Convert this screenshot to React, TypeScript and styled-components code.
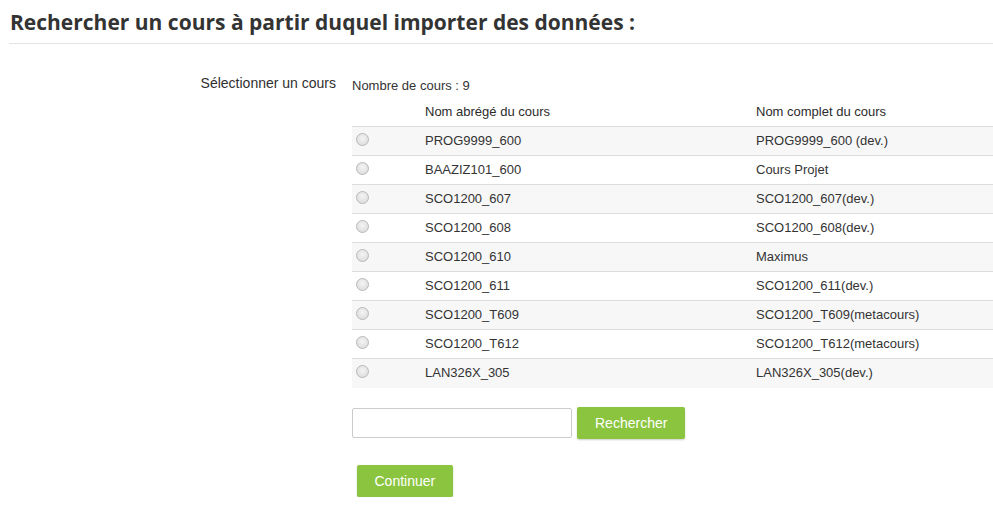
import styled, { createGlobalStyle } from "styled-components";

const GlobalStyle = createGlobalStyle`
  body {
    margin: 0;
    background: #fff;
    font-family: "Liberation Sans", Arial, sans-serif;
    color: #333;
  }
`;

const Page = styled.div`
  padding: 0 0 0 9px;
`;

const Heading = styled.h2`
  font-family: "Open Sans", sans-serif;
  font-weight: 700;
  font-size: 21px;
  line-height: 28px;
  color: #333;
  margin: 0;
  padding: 8px 0 7px 1px;
  border-bottom: 1px solid #e3e3e3;
`;

const FormRow = styled.div`
  display: grid;
  grid-template-columns: 327px 1fr;
  gap: 16px;
  margin-top: 30px;
`;

const Label = styled.div`
  text-align: right;
  font-size: 14px;
  line-height: 20px;
  margin-top: -1px;
  color: #2f2f2f;
`;

const Content = styled.div`
  display: flex;
  flex-direction: column;
`;

const Count = styled.div`
  font-size: 13px;
  line-height: 18px;
  padding-top: 3px;
`;

const Table = styled.table`
  border-collapse: collapse;
  width: 641px;
  font-size: 13px;
  margin-top: 4px;
`;

const HeadCell = styled.th`
  text-align: left;
  font-weight: 400;
  padding: 4px 8px 6px;
  height: 27px;
  box-sizing: border-box;
  line-height: 17px;
  color: #2b2b2b;
`;

const Row = styled.tr<{ $odd: boolean }>`
  background: ${(p) => (p.$odd ? "#f7f7f7" : "#fff")};
  border-top: 1px solid #dddddd;
`;

const Cell = styled.td`
  padding: 0 8px 2px;
  height: 29px;
  box-sizing: border-box;
  line-height: 17px;
`;

const RadioCell = styled(Cell)`
  padding: 0 0 0 4px;
  width: 65px;
`;

const Radio = styled.span`
  display: block;
  width: 11px;
  height: 11px;
  border-radius: 50%;
  border: 1px solid #b9b9b9;
  background: radial-gradient(circle at 50% 40%, #f4f4f4, #d7d7d7);
  margin-top: -3px;
`;

const SearchRow = styled.div`
  display: flex;
  align-items: center;
  gap: 5px;
  margin-top: 19px;
`;

const SearchInput = styled.input`
  width: 220px;
  height: 30px;
  box-sizing: border-box;
  border: 1px solid #cccccc;
  border-radius: 2px;
  font-size: 13px;
  padding: 4px 8px;
`;

const GreenButton = styled.button`
  background: #8bc53f;
  color: #fff;
  border: none;
  border-radius: 2px;
  font-family: "Liberation Sans", Arial, sans-serif;
  font-size: 14px;
  height: 32px;
  padding: 0 18px;
  box-shadow: 0 1px 2px rgba(0, 0, 0, 0.2);
  cursor: pointer;
`;

const ContinueButton = styled(GreenButton)`
  align-self: flex-start;
  margin: 26px 0 0 5px;
  padding: 0 17.5px;
`;

const courses = [
  ["PROG9999_600", "PROG9999_600 (dev.)"],
  ["BAAZIZ101_600", "Cours Projet"],
  ["SCO1200_607", "SCO1200_607(dev.)"],
  ["SCO1200_608", "SCO1200_608(dev.)"],
  ["SCO1200_610", "Maximus"],
  ["SCO1200_611", "SCO1200_611(dev.)"],
  ["SCO1200_T609", "SCO1200_T609(metacours)"],
  ["SCO1200_T612", "SCO1200_T612(metacours)"],
  ["LAN326X_305", "LAN326X_305(dev.)"],
];

export default function App() {
  return (
    <Page>
      <GlobalStyle />
      <Heading>Rechercher un cours à partir duquel importer des données :</Heading>
      <FormRow>
        <Label>Sélectionner un cours</Label>
        <Content>
          <Count>Nombre de cours : {courses.length}</Count>
          <Table>
            <thead>
              <tr>
                <HeadCell style={{ width: 65 }}></HeadCell>
                <HeadCell style={{ width: 331 }}>Nom abrégé du cours</HeadCell>
                <HeadCell>Nom complet du cours</HeadCell>
              </tr>
            </thead>
            <tbody>
              {courses.map(([short, full], i) => (
                <Row key={short} $odd={i % 2 === 0}>
                  <RadioCell>
                    <Radio />
                  </RadioCell>
                  <Cell>{short}</Cell>
                  <Cell>{full}</Cell>
                </Row>
              ))}
            </tbody>
          </Table>
          <SearchRow>
            <SearchInput type="text" />
            <GreenButton>Rechercher</GreenButton>
          </SearchRow>
          <ContinueButton>Continuer</ContinueButton>
        </Content>
      </FormRow>
    </Page>
  );
}
